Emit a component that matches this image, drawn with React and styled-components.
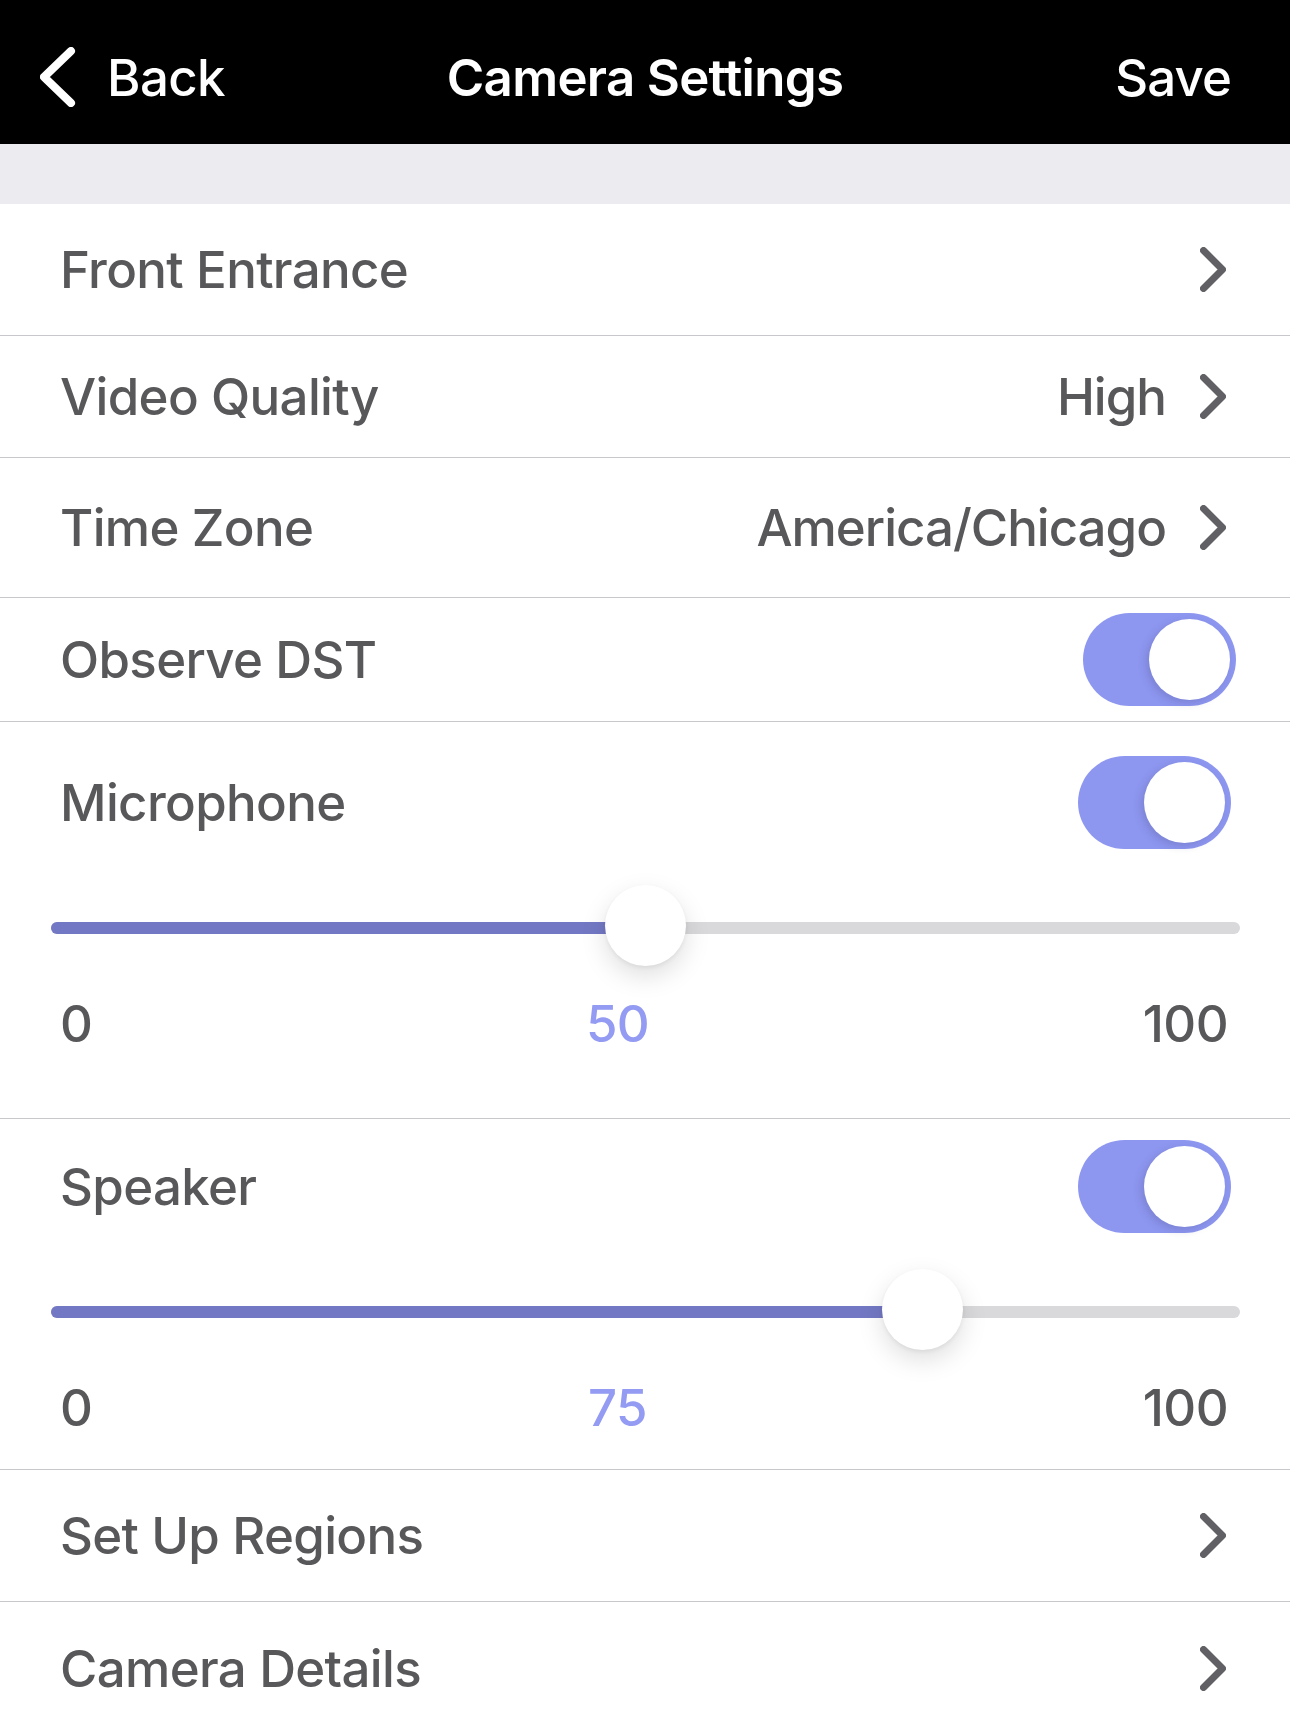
import React from 'react';
import styled, { createGlobalStyle } from 'styled-components';

const GlobalStyle = createGlobalStyle`
  html, body {
    margin: 0;
    padding: 0;
    background: #ffffff;
  }
  body {
    font-family: Inter, "Noto Sans", "Liberation Sans", sans-serif;
    -webkit-font-smoothing: antialiased;
  }
  * {
    box-sizing: border-box;
  }
`;

const BackChevron = () => (
  <svg width="36" height="60" viewBox="0 0 36 60">
    <polyline
      points="31,4 4,30 31,56"
      fill="none"
      stroke="#ffffff"
      strokeWidth="8"
      strokeLinecap="round"
      strokeLinejoin="round"
    />
  </svg>
);

const RowChevron = () => (
  <svg width="26" height="45" viewBox="0 0 26 45">
    <polyline
      points="3.5,3.5 22.5,22.5 3.5,41.5"
      fill="none"
      stroke="#616165"
      strokeWidth="7"
      strokeLinecap="round"
      strokeLinejoin="round"
    />
  </svg>
);

const Toggle = ({ on = true }) => (
  <ToggleTrack $on={on}>
    <ToggleKnob $on={on} />
  </ToggleTrack>
);

const Slider = ({ value }) => {
  const v = value / 100;
  return (
    <SliderTrackArea>
      <Track />
      <TrackFill style={{ width: `calc(40px + (100% - 81px) * ${v})` }} />
      <Thumb style={{ left: `calc((100% - 81px) * ${v})` }} />
    </SliderTrackArea>
  );
};

const LinkRow = ({ label, value, height }) => (
  <Row $height={height}>
    <Label>{label}</Label>
    <Trailing>
      {value && <Value>{value}</Value>}
      <RowChevron />
    </Trailing>
  </Row>
);

const VolumeSection = ({ label, value, padTop, padBottom }) => (
  <Section $padTop={padTop} $padBottom={padBottom}>
    <SectionHead>
      <Label>{label}</Label>
      <Toggle />
    </SectionHead>
    <SliderWrap>
      <Slider value={value} />
    </SliderWrap>
    <Scale>
      <ScaleNum>0</ScaleNum>
      <ScaleNum $accent>{value}</ScaleNum>
      <ScaleNum>100</ScaleNum>
    </Scale>
  </Section>
);

export default function App() {
  return (
    <>
      <GlobalStyle />
      <Screen>
        <NavBar>
          <NavBack>
            <BackChevron />
            <NavText>Back</NavText>
          </NavBack>
          <NavTitle>Camera Settings</NavTitle>
          <NavSave>Save</NavSave>
        </NavBar>
        <GroupGap />
        <LinkRow label="Front Entrance" height={132} />
        <LinkRow label="Video Quality" value="High" height={122} />
        <LinkRow label="Time Zone" value="America/Chicago" height={140} />
        <SwitchRow>
          <Label>Observe DST</Label>
          <Toggle />
        </SwitchRow>
        <VolumeSection label="Microphone" value={50} padTop={34} padBottom={65} />
        <VolumeSection label="Speaker" value={75} padTop={21} padBottom={32} />
        <LinkRow label="Set Up Regions" height={132} />
        <LinkRow label="Camera Details" height={134} />
      </Screen>
    </>
  );
}

const Screen = styled.div`
  width: 1290px;
  min-height: 1728px;
  background: #ffffff;
  overflow: hidden;
`;

const NavBar = styled.header`
  height: 144px;
  background: #000000;
  display: grid;
  grid-template-columns: 1fr auto 1fr;
  align-items: center;
  padding: 10px 40px 0 40px;
  color: #ffffff;
`;

const NavBack = styled.div`
  display: flex;
  align-items: center;
  gap: 31px;
`;

const NavText = styled.span`
  font-size: 51px;
  font-weight: 500;
  letter-spacing: -0.6px;
`;

const NavTitle = styled.h1`
  margin: 0;
  font-size: 51px;
  font-weight: 600;
  letter-spacing: -0.7px;
`;

const NavSave = styled(NavText)`
  justify-self: end;
  margin-right: 19px;
  letter-spacing: -0.9px;
`;

const GroupGap = styled.div`
  height: 60px;
  background: #ebebf0;
`;

const Row = styled.div`
  height: ${(p) => p.$height}px;
  display: flex;
  align-items: center;
  justify-content: space-between;
  padding: 0 64px 0 60px;
  border-bottom: 1px solid #c8c8cc;
`;

const SwitchRow = styled(Row)`
  height: 124px;
  padding: 0 54px 0 60px;
`;

const Label = styled.span`
  font-size: 51px;
  font-weight: 500;
  color: #58585a;
  letter-spacing: -0.65px;
`;

const Trailing = styled.div`
  display: flex;
  align-items: center;
  gap: 34px;
`;

const Value = styled(Label)`
  letter-spacing: -1px;
`;

const ToggleTrack = styled.div`
  width: 153px;
  height: 93px;
  border-radius: 47px;
  background: ${(p) => (p.$on ? '#8e97f0' : '#e9e9eb')};
  padding: 6px;
  display: flex;
  justify-content: ${(p) => (p.$on ? 'flex-end' : 'flex-start')};
`;

const ToggleKnob = styled.div`
  width: 81px;
  height: 81px;
  border-radius: 50%;
  background: #ffffff;
  box-shadow: -3px 3px 8px rgba(40, 40, 90, 0.18);
`;

const Section = styled.div`
  padding-top: ${(p) => p.$padTop}px;
  padding-bottom: ${(p) => p.$padBottom}px;
  border-bottom: 1px solid #c8c8cc;
`;

const SectionHead = styled.div`
  display: flex;
  align-items: center;
  justify-content: space-between;
  padding: 0 59px 0 60px;
`;

const SliderWrap = styled.div`
  padding: 0 50px 0 51px;
  margin-top: 36px;
`;

const SliderTrackArea = styled.div`
  position: relative;
  height: 81px;
`;

const Track = styled.div`
  position: absolute;
  left: 0;
  right: 0;
  top: 37px;
  height: 12px;
  border-radius: 6px;
  background: #d9d9dc;
`;

const TrackFill = styled.div`
  position: absolute;
  left: 0;
  top: 37px;
  height: 12px;
  border-radius: 6px 0 0 6px;
  background: #7378c4;
`;

const Thumb = styled.div`
  position: absolute;
  top: 0;
  width: 81px;
  height: 81px;
  border-radius: 50%;
  background: #ffffff;
  box-shadow: 0 10px 26px rgba(0, 0, 0, 0.13), 0 2px 4px rgba(0, 0, 0, 0.06);
`;

const Scale = styled.div`
  display: flex;
  justify-content: space-between;
  padding: 0 62px 0 60px;
  margin-top: 27px;
  height: 60px;
  align-items: center;
`;

const ScaleNum = styled.span`
  font-size: 51px;
  font-weight: 500;
  color: ${(p) => (p.$accent ? '#939bf2' : '#58585a')};
  letter-spacing: -0.6px;
`;
